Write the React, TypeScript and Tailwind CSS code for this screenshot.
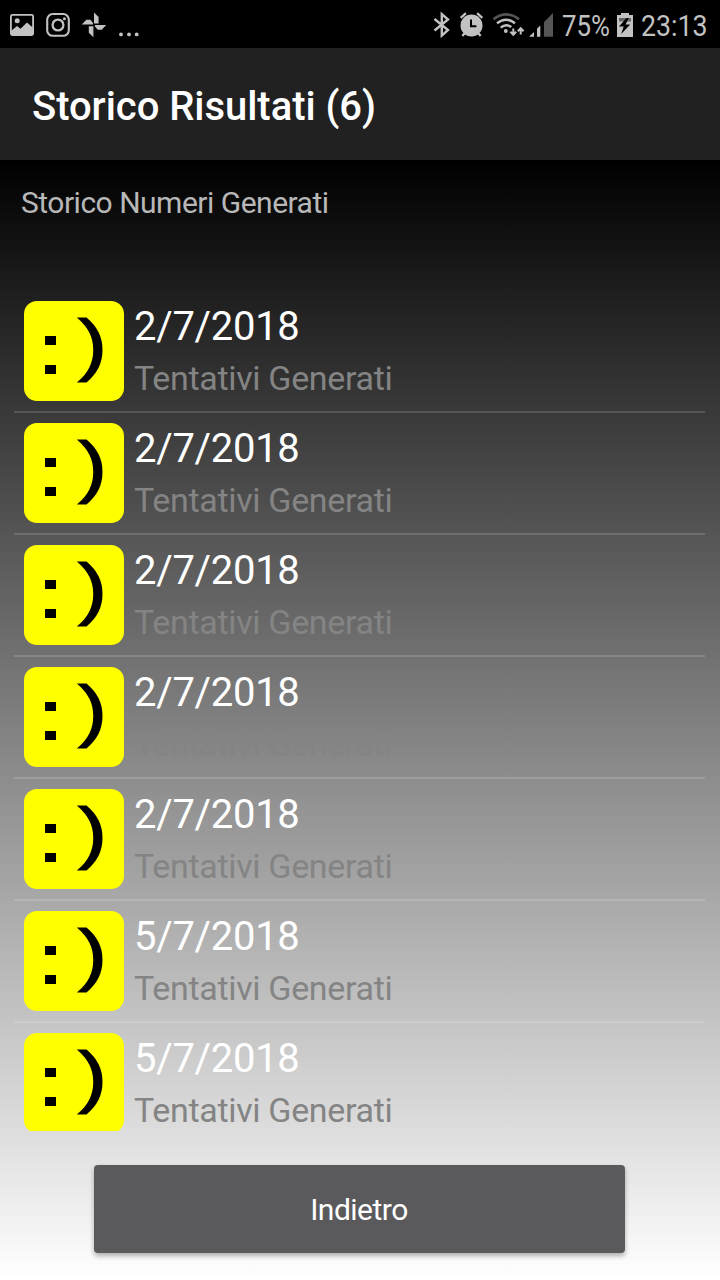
import type React from "react";

interface Result {
	id: number;
	date: string;
}

const results: Result[] = [
	{ id: 1, date: "2/7/2018" },
	{ id: 2, date: "2/7/2018" },
	{ id: 3, date: "2/7/2018" },
	{ id: 4, date: "2/7/2018" },
	{ id: 5, date: "2/7/2018" },
	{ id: 6, date: "5/7/2018" },
	{ id: 7, date: "5/7/2018" },
];

// Notification icons on the left side of the status bar
const Notifications: React.FC = () => (
	<svg className="h-12 w-[150px] shrink-0" viewBox="0 0 150 48" fill="#c2c2c2">
		<rect
			x="10.9"
			y="14.9"
			width="22.2"
			height="20.2"
			rx="1.5"
			fill="none"
			stroke="#c2c2c2"
			strokeWidth="1.8"
		/>
		<circle cx="17.2" cy="20.8" r="2.5" />
		<path d="M11 31l6-5 3.5 2.700 6.500-6.200 6 5.200V35H11z" />
		<g fill="none" stroke="#c2c2c2" strokeWidth="2.1">
			<rect x="47.2" y="14" width="21.6" height="21.8" rx="5.6" />
			<circle cx="58" cy="25" r="5.4" strokeWidth="2.3" />
		</g>
		<circle cx="64.4" cy="18.7" r="1.5" />
		{/* Pinwheel */}
		<path d="M94 12.500l4.600 4.600v6.500H94zM106.200 25l-4.500 4.700h-4L95 26.400V25zM93.400 37.300l-4.600-4.500v-6.500h4.600zM81.800 24.500l4.500-4.700h4l2.700 3.300v1.400z" />
		<circle cx="121" cy="34.400" r="1.900" />
		<circle cx="129" cy="34.400" r="1.900" />
		<circle cx="136.700" cy="34.400" r="1.900" />
	</svg>
);

// Bluetooth, alarm, wifi and signal strength
const Indicators: React.FC = () => (
	<svg
		className="h-12 w-[130px] shrink-0"
		viewBox="430 0 130 48"
		fill="none"
		stroke="#c2c2c2"
	>
		<path
			d="M434.500 19l13.500 11-6.200 5.600V14.200l6.200 5.300-13.500 11"
			strokeWidth="2.400"
		/>
		<circle cx="471.500" cy="25.500" r="11" fill="#c2c2c2" stroke="none" />
		<path
			d="M460.700 17.800l5.200-4.600M482.300 17.800l-5.200-4.600M465 33l-2.700 2.900M478 33l2.700 2.900"
			strokeWidth="2.300"
		/>
		<path d="M471 19.500v6.700h5.400" stroke="#000" strokeWidth="2" />
		<path d="M493.500 19.200q13-9.500 25.500 0" stroke="#555" strokeWidth="2.600" />
		<path
			d="M497 23.200q9-7 18 0M500.700 27.600q5.300-4.300 10.600-.5"
			strokeWidth="2.500"
		/>
		<circle cx="505.800" cy="31" r="1.900" fill="#c2c2c2" stroke="none" />
		<path
			d="M513.300 28.500v6M510.400 31.800l2.900 3 2.900-3M520.700 34.500v-6M517.800 31.200l2.900-3 2.900 3"
			strokeWidth="2"
		/>
		<g stroke="none">
			<path d="M529 36.800l5-4.800v4.800z" fill="#c2c2c2" />
			<path d="M537 28.800l3.300-3.200v11.200H537z" fill="#c2c2c2" />
			<path d="M544 22l9-9v23.800h-9z" fill="#555" />
		</g>
	</svg>
);

const Battery: React.FC = () => (
	<svg className="h-12 w-5 shrink-0" viewBox="615 0 20 48">
		<path d="M621 13h8v2h4v22h-16V15h4z" fill="#c2c2c2" />
		<path d="M619 18h12v3.500h-12z" fill="#666" />
		<path
			d="M626.500 18l-7.500 8.500h4.700l-2.500 7.500 9-9.500h-4.700l3.300-6.500z"
			fill="#000"
		/>
	</svg>
);

const StatusBar: React.FC = () => (
	<div className="flex h-12 shrink-0 items-center bg-black text-[30px] leading-none text-[#c2c2c2]">
		<Notifications />
		<div className="w-[280px]" />
		<Indicators />
		<div className="w-[55px] pt-[3px] pl-[2px]">
			<span className="inline-block origin-left scale-x-[0.86]">75%</span>
		</div>
		<Battery />
		<div className="w-[85px] pt-[3px] pl-[6px]">
			<span className="inline-block origin-left scale-x-[0.89]">23:13</span>
		</div>
	</div>
);

const Smiley: React.FC = () => (
	<svg
		className="size-[100px] shrink-0 rounded-[13px] bg-[#ffff00]"
		viewBox="0 0 100 100"
		fontFamily="Liberation Sans, sans-serif"
		fontSize="69"
		stroke="#000"
	>
		<text transform="translate(14.200 71.900) scale(1.28 1)" strokeWidth="2">
			:
		</text>
		<text transform="translate(54 67) scale(1.27 0.985)" strokeWidth="1.2">
			)
		</text>
	</svg>
);

const ResultRow: React.FC<{ result: Result }> = ({ result }) => (
	<li className="flex h-[122px] shrink-0 border-b-2 border-white/15 pt-[10px] pl-[10px]">
		<Smiley />
		<div className="pl-[10px]">
			<p className="mt-[-1px] text-[40px] leading-[54px] tracking-[-0.3px] text-white">
				{result.date}
			</p>
			<p className="mt-[-1px] text-[34px] leading-[50px] tracking-[-0.33px] text-[#848484]">
				Tentativi Generati
			</p>
		</div>
	</li>
);

const App: React.FC = () => {
	return (
		<div className="flex h-[1280px] w-[720px] flex-col overflow-hidden bg-black font-['Roboto',sans-serif] whitespace-nowrap">
			<StatusBar />

			{/* Header */}
			<header className="flex h-28 shrink-0 items-center bg-[#212121] pl-8">
				<h1 className="pt-[6px] text-[40px] leading-none font-medium tracking-[-0.05px] text-white">
					Storico Risultati (6)
				</h1>
			</header>

			<main className="flex grow flex-col bg-linear-to-b/srgb from-black to-white">
				<h2 className="h-[131px] shrink-0 pt-[23px] pl-[21px] text-[30px] leading-10 tracking-[-0.5px] text-[#b8b8b8]">
					Storico Numeri Generati
				</h2>

				<ul className="mr-[15px] ml-[14px] flex h-[840px] shrink-0 flex-col overflow-hidden">
					{results.map((result) => (
						<ResultRow key={result.id} result={result} />
					))}
				</ul>

				<button className="mt-[34px] ml-[94px] h-[88px] w-[531px] rounded-[4px] bg-[#5a5a5c] pr-px text-[30px] tracking-[-0.5px] text-white shadow-[0_3px_5px_rgba(0,0,0,0.3)]">
					Indietro
				</button>
			</main>
		</div>
	);
};

export default App;
